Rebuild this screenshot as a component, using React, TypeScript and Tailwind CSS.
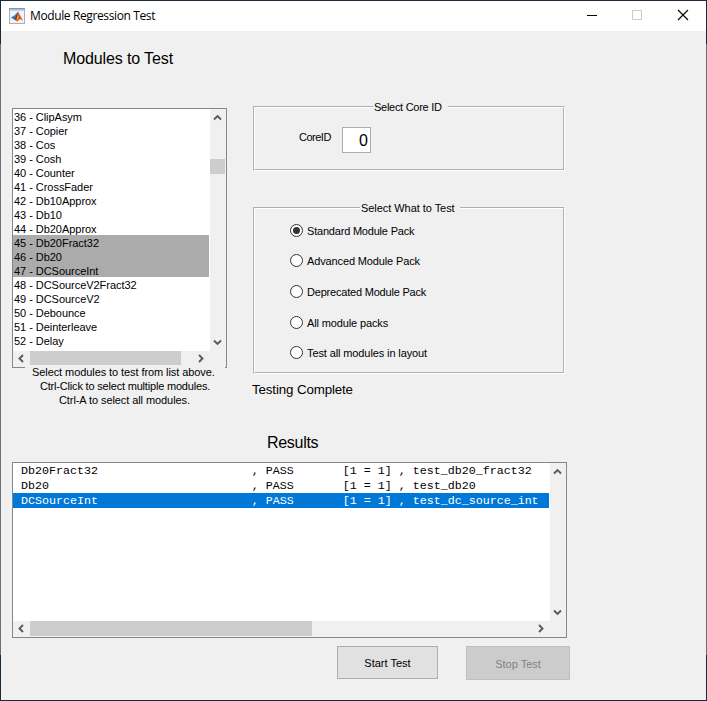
import React from "react";

const modules = [
  "36 - ClipAsym", "37 - Copier", "38 - Cos", "39 - Cosh", "40 - Counter", "41 - CrossFader",
  "42 - Db10Approx", "43 - Db10", "44 - Db20Approx", "45 - Db20Fract32", "46 - Db20",
  "47 - DCSourceInt", "48 - DCSourceV2Fract32", "49 - DCSourceV2", "50 - Debounce",
  "51 - Deinterleave", "52 - Delay",
];
const selectedModules = [9, 10, 11];

const results = [
  { name: "Db20Fract32", test: "test_db20_fract32" },
  { name: "Db20", test: "test_db20" },
  { name: "DCSourceInt", test: "test_dc_source_int" },
];

const options = [
  { label: "Standard Module Pack", style: "h-[30px] tracking-[-0.2px]" },
  { label: "Advanced Module Pack", style: "h-[31px] tracking-[-0.13px]" },
  { label: "Deprecated Module Pack", style: "h-[31px] tracking-[-0.2px]" },
  { label: "All module packs", style: "h-[30px] tracking-[-0.13px]" },
  { label: "Test all modules in layout", style: "h-[30px] tracking-[-0.11px]" },
];

function Arrow({ dir, className = "" }: { dir: "up" | "down" | "left" | "right"; className?: string }) {
  const paths = {
    up: "M1 6.5 L4.5 3 L8 6.5",
    down: "M1 2.5 L4.5 6 L8 2.5",
    left: "M6 1 L2.5 4.5 L6 8",
    right: "M3 1 L6.5 4.5 L3 8",
  };
  return (
    <svg className={`block shrink-0 ${className}`} width="9" height="9" viewBox="0 0 9 9">
      <path d={paths[dir]} fill="none" stroke="#5a5a5a" strokeWidth="1.9" />
    </svg>
  );
}

function AppIcon() {
  return (
    <svg className="block shrink-0" width="16" height="16" viewBox="0 0 16 16">
      <rect x="0.5" y="0.5" width="15" height="15" fill="#f1f3f5" stroke="#a9aeb4" />
      <rect x="0" y="0" width="16" height="1" fill="#7d95ad" />
      <rect x="1" y="1" width="14" height="1.6" fill="#9cc4e6" />
      <path d="M1.8 9.4 L5.5 7.6 L9 3.8 L8 9 L5.2 11.6 Z" fill="#3d7ab8" />
      <path d="M9 3.4 L10.8 7 L14 12.4 L11 10.9 L8.2 13.4 L5.2 11.6 L7.5 9 Z" fill="#d9541e" />
      <path d="M9 3.4 L8.4 8 L6.5 11.4 L5.2 11.6 L7 9 Z" fill="#5e2a30" />
      <path d="M9 6 L9.7 9 L8.4 12.4 L7.9 10 Z" fill="#f5a33a" />
    </svg>
  );
}

function GroupBox({ title, className, legend, children }: { title: string; className: string; legend: string; children: React.ReactNode }) {
  return (
    <fieldset className={`relative w-[312px] border border-t-[#b0b0b0] border-l-[#b0b0b0] border-r-white border-b-white ${className}`}>
      <span className={`absolute -top-[7px] z-10 h-[14px] bg-[#f0f0f0] pl-px leading-[14px] whitespace-pre ${legend}`}>{title}</span>
      <div className="h-full border border-t-white border-l-white border-r-[#b0b0b0] border-b-[#b0b0b0]">{children}</div>
    </fieldset>
  );
}

export default function App() {
  return (
    <div className="h-[701px] w-[707px] overflow-hidden bg-[linear-gradient(to_bottom,#1b2a3a_44px,#6e6e73_44px,#6e6e73_655px,#1b2a3a_655px)] p-px font-['Liberation_Sans',Arial,sans-serif] text-[11px] text-black">
      <div className="flex h-[699px] w-[705px] flex-col bg-[#f0f0f0]">
        <header className="flex h-[30px] shrink-0 items-center bg-white pl-2">
          <AppIcon />
          <h1 className="ml-[5px] flex-1 font-['Open_Sans',sans-serif] text-[12px] tracking-[-0.38px] whitespace-nowrap">Module Regression Test</h1>
          <svg className="block shrink-0" width="120" height="30" viewBox="0 0 120 30" shapeRendering="crispEdges">
            <path d="M1 14.5 h10" stroke="#000" />
            <rect x="46.5" y="9.5" width="9" height="9" fill="none" stroke="#ccc" />
            <path d="M92 9 l10 10 M102 9 l-10 10" stroke="#000" shapeRendering="auto" strokeWidth="1.1" />
          </svg>
        </header>

        <main className="flex flex-1 flex-col pl-[11px]">
          <div className="flex h-[391px]">
            <section className="w-[215px]">
              <h2 className="mt-[18px] ml-[51px] h-5 text-[16px] leading-5 tracking-[-0.12px] whitespace-nowrap">Modules to Test</h2>
              <div className="mt-[39px] flex h-[260px] border border-[#828790]">
                <div className="flex w-[197px] flex-col">
                  <ul className="h-[242px] bg-white tracking-[-0.04px]">
                    {modules.map((m, i) => (
                      <li key={m} className={`h-[14px] w-[196px] pl-px leading-[16px] whitespace-nowrap ${selectedModules.includes(i) ? "bg-[#ababab]" : ""}`}>{m}</li>
                    ))}
                  </ul>
                  <div className="flex h-[14px] items-center">
                    <Arrow dir="left" className="ml-1" />
                    <div className="ml-1 h-full w-[151px] bg-[#cdcdcd]" />
                    <Arrow dir="right" className="ml-[15px]" />
                  </div>
                </div>
                <div className="flex w-4 flex-col">
                  <Arrow dir="up" className="mt-1 ml-[3px]" />
                  <div className="mt-[37px] h-[15px] w-[15px] bg-[#cdcdcd]" />
                  <Arrow dir="down" className="mt-[164px] ml-[3px]" />
                </div>
              </div>
              <div className="relative -mt-[3px] ml-[13px] h-[43px] w-[200px] bg-[#f0f0f0] leading-[14px] whitespace-nowrap">
                <p className="pl-[7px] tracking-[-0.08px]">Select modules to test from list above.</p>
                <p className="pl-[15px] tracking-[-0.19px]">Ctrl-Click to select multiple modules.</p>
                <p className="pl-[34px] tracking-[-0.08px]">Ctrl-A to select all modules.</p>
              </div>
            </section>

            <section className="ml-[26px] w-[312px] pt-[75px]">
              <GroupBox title="Select Core ID" className="h-[65px]" legend="left-[119px] w-[75px] tracking-[-0.28px]">
                <div className="flex pt-[19px] pl-[44px]">
                  <label className="mt-[3px] w-[43px] leading-[14px] tracking-[-0.5px]">CoreID</label>
                  <span className="h-[26px] w-[29px] border border-[#abadb3] bg-white pr-[2px] text-right text-[16px] leading-[26px]">0</span>
                </div>
              </GroupBox>
              <GroupBox title="Select What to Test" className="mt-[36px] h-[167px]" legend="left-[106px] w-[100px] tracking-[-0.05px]">
                <div className="pt-[14px] pl-[35px]">
                  {options.map((o, i) => (
                    <label key={o.label} className={`flex items-start ${o.style}`}>
                      <span className="mt-px flex h-[13px] w-[13px] items-center justify-center rounded-full border border-[#333] bg-white">
                        {i === 0 && <span className="h-[7px] w-[7px] rounded-full bg-[#333]" />}
                      </span>
                      <span className="ml-1 leading-[16px] whitespace-nowrap">{o.label}</span>
                    </label>
                  ))}
                </div>
              </GroupBox>
              <p className="mt-[7px] -ml-px text-[13.33px] leading-[18px] tracking-[-0.13px] whitespace-nowrap">Testing Complete</p>
            </section>
          </div>

          <h2 className="mt-[11px] ml-[255px] h-5 text-[16px] leading-5 tracking-[-0.3px]">Results</h2>
          <div className="mt-[9px] flex h-[176px] w-[555px] border border-[#828790]">
            <div className="flex w-[537px] flex-col">
              <ul className="h-[158px] bg-white font-['Liberation_Mono','Courier_New',monospace] text-[11.667px]">
                {results.map((r, i) => (
                  <li key={r.name} className={`h-[15px] w-[536px] pl-px leading-[17px] whitespace-pre ${i === 2 ? "bg-[#0078d7] text-white" : ""}`}>
                    {" " + r.name.padEnd(33) + ", PASS       [1 = 1] , " + r.test}
                  </li>
                ))}
              </ul>
              <div className="flex h-[15px] items-center">
                <Arrow dir="left" className="ml-1" />
                <div className="ml-1 h-full w-[282px] bg-[#cdcdcd]" />
                <Arrow dir="right" className="ml-[224px]" />
              </div>
            </div>
            <div className="flex w-4 flex-col">
              <Arrow dir="up" className="mt-1 ml-[3px]" />
              <Arrow dir="down" className="mt-[132px] ml-[3px]" />
            </div>
          </div>
          <div className="mt-2 flex items-start pl-[325px]">
            <button className="h-[33px] w-[101px] border border-[#adadad] bg-[#e1e1e1] pt-[2px]">Start Test</button>
            <button className="ml-[28px] h-[34px] w-[104px] border border-[#bfbfbf] bg-[#ccc] pt-[2px] text-[#838383]">Stop Test</button>
          </div>
        </main>
      </div>
    </div>
  );
}
